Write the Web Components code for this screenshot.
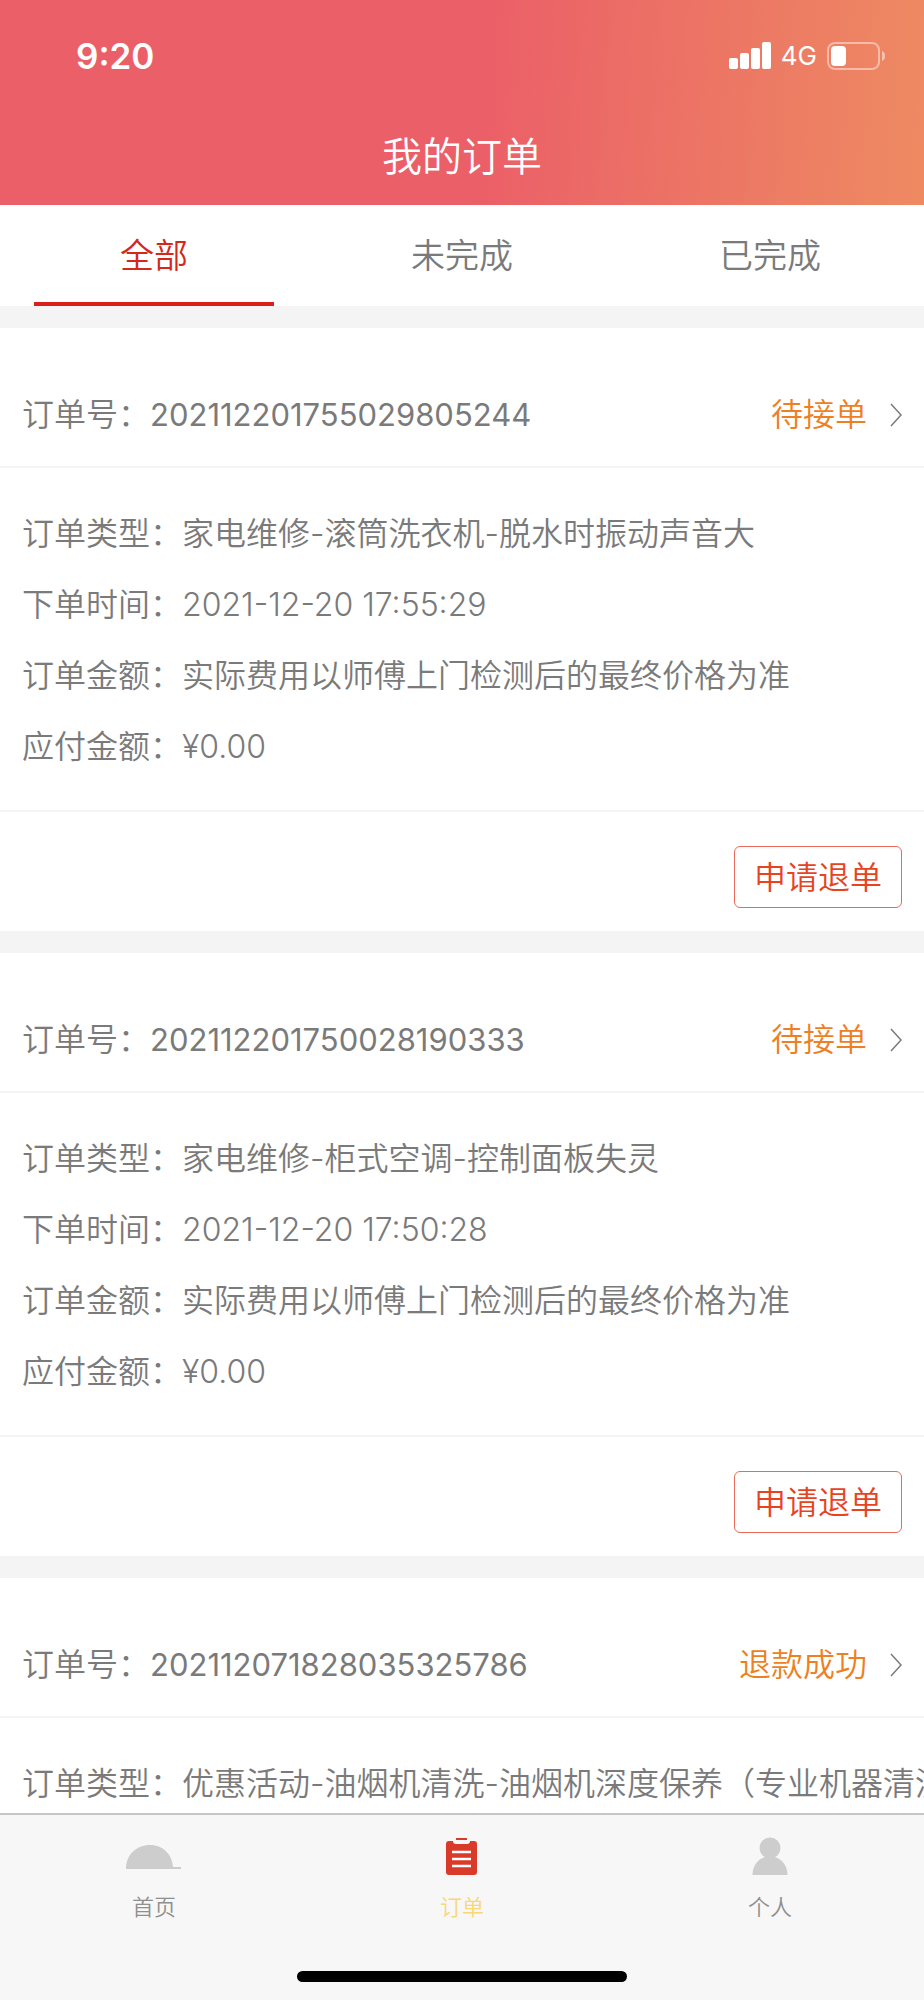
<!DOCTYPE html>
<html lang="zh-CN">
<head>
<meta charset="utf-8">
<meta name="viewport" content="width=device-width, initial-scale=1">
<title>我的订单</title>
<style>
    html, body {
        margin: 0;
        height: 100%;
    }

    body {
        font-family: Inter, "Noto Sans CJK SC", sans-serif;
        font-size: 32px;
        font-weight: 350;
        color: #7a7a7a;
        background: #fff;
    }
</style>
</head>
<body>

<order-page></order-page>

<script>

// phone status bar: time, signal, battery
customElements.define('status-bar', class extends HTMLElement{
    connectedCallback(){
        this.attachShadow({mode: 'open'});
        this.shadowRoot.innerHTML = `
        <style>
        :host {
            display: flex;
            justify-content: space-between;
            align-items: center;
            height: 111px;
            padding: 0 38px 0 76px;
            color: #fff;
        }

        .time {
            font-size: 35px;
            font-weight: 600;
        }

        .right {
            display: flex;
            align-items: center;
            gap: 10px;
            font-size: 26px;
            font-weight: 400;
        }

        svg {
            display: block;
        }
        </style>

        <span class="time">${this.getAttribute('time')}</span>
        <div class="right">
            <svg width="42" height="28" viewBox="0 0 42 28" fill="#fff">
                <rect x="0" y="16" width="9" height="11" rx="2"/>
                <rect x="11" y="11" width="9" height="16" rx="2"/>
                <rect x="22" y="6" width="9" height="21" rx="2"/>
                <rect x="33" y="0" width="9" height="27" rx="2"/>
            </svg>
            <span>${this.getAttribute('network')}</span>
            <svg width="59" height="28" viewBox="0 0 59 28">
                <rect x="1" y="1" width="51" height="26" rx="7" fill="none" stroke="#fff" stroke-opacity=".45" stroke-width="2"/>
                <rect x="4" y="4" width="15" height="20" rx="4" fill="#fff"/>
                <path d="M55 9c4 1 4 9 0 10z" fill="#fff" fill-opacity=".5"/>
            </svg>
        </div>
        `;
    }
});

customElements.define('page-header', class extends HTMLElement{
    connectedCallback(){
        this.attachShadow({mode: 'open'});
        this.shadowRoot.innerHTML = `
        <style>
        :host {
            display: block;
            height: 205px;
            background: linear-gradient(94deg, #eb5f68 0%, #eb5f68 52%, #ec7365 74%, #ee8a62 100%);
        }

        h1 {
            margin: 0;
            padding-top: 16px;
            font-size: 40px;
            line-height: 60px;
            font-weight: inherit;
            text-align: center;
            color: #fff;
        }
        </style>

        <slot name="status"></slot>
        <h1><slot></slot></h1>
        `;
    }
});

customElements.define('order-tabs', class extends HTMLElement{
    connectedCallback(){
        this.attachShadow({mode: 'open'});
        this.shadowRoot.innerHTML = `
        <style>
        :host {
            display: flex;
            background: #fff;
        }

        button {
            flex: 1;
            display: flex;
            justify-content: center;
            padding: 0;
            border: 0;
            background: none;
            font: inherit;
            font-size: 34px;
            color: inherit;
        }

        span {
            width: 78%;
            padding-top: 5px;
            line-height: 92px;
            border-bottom: 4px solid transparent;
        }

        .active {
            color: #d5281c;
        }

        .active span {
            border-color: #d9201a;
        }
        </style>

        <button class="active"><span>全部</span></button>
        <button><span>未完成</span></button>
        <button><span>已完成</span></button>
        `;

        var buttons = this.shadowRoot.querySelectorAll('button');

        for(let elem of buttons){
            elem.addEventListener('click', () => {
                for(let b of buttons) b.classList.remove('active');
                elem.classList.add('active');
            });
        }
    }
});

customElements.define('order-row', class extends HTMLElement{
    connectedCallback(){
        this.attachShadow({mode: 'open'});
        this.shadowRoot.innerHTML = `
        <style>
        :host {
            display: flex;
            line-height: 71px;
            white-space: nowrap;
        }
        </style>

        <span>${this.getAttribute('label')}：</span>
        <span><slot></slot></span>
        `;
    }
});

customElements.define('order-card', class extends HTMLElement{
    connectedCallback(){
        // a refunded order has nothing left to apply for
        var foot = this.hasAttribute('refundable') ? '<div class="foot"><button>申请退单</button></div>' : '';

        this.attachShadow({mode: 'open'});
        this.shadowRoot.innerHTML = `
        <style>
        :host {
            display: block;
            margin-top: 22px;
            background: #fff;
            overflow: hidden;
        }

        .head {
            display: flex;
            align-items: center;
            padding: 63px 22px 27px;
            line-height: 48px;
            border-bottom: 2px solid #f4f4f4;
            color: inherit;
            text-decoration: none;
        }

        .number {
            font-size: 31px;
            font-weight: 400;
        }

        .status {
            margin-left: auto;
            margin-right: 23px;
            color: #ee7f22;
        }

        .body {
            padding: 30px 22px 28px;
        }

        .foot {
            display: flex;
            justify-content: flex-end;
            padding: 34px 22px 23px;
            border-top: 2px solid #f4f4f4;
        }

        button {
            height: 62px;
            margin: 0;
            padding: 0 19px 4px;
            border: 1px solid #ea6a58;
            border-radius: 6px;
            background: #fff;
            font: inherit;
            color: #e8431f;
        }
        </style>

        <a class="head" href="#">
            <span>订单号：</span>
            <span class="number">${this.getAttribute('number')}</span>
            <span class="status">${this.getAttribute('status')}</span>
            <svg width="12" height="24" viewBox="0 0 12 24" fill="none" stroke="#7a7a7a" stroke-width="1.5">
                <path d="M1 1l10 11L1 23"/>
            </svg>
        </a>
        <div class="body"><slot></slot></div>
        ${foot}
        `;
    }
});

customElements.define('bottom-nav', class extends HTMLElement{
    connectedCallback(){
        this.attachShadow({mode: 'open'});
        this.shadowRoot.innerHTML = `
        <style>
        :host {
            display: block;
            border-top: 2px solid #c6c6c6;
            background: #f7f7f7;
        }

        nav {
            display: flex;
        }

        a {
            flex: 1;
            display: flex;
            flex-direction: column;
            align-items: center;
            gap: 14px;
            padding-top: 22px;
            font-size: 22px;
            line-height: 36px;
            color: #8f8f8f;
            text-decoration: none;
        }

        a.active {
            color: #f8d874;
        }

        svg {
            display: block;
        }

        /* home indicator */
        .line {
            width: 330px;
            height: 11px;
            margin: 46px auto 18px;
            border-radius: 6px;
            background: #000;
        }
        </style>

        <nav>
            <a href="#">
                <svg width="56" height="38" viewBox="0 0 56 38" fill="#cdcdcd">
                    <path d="M0 32C0 17 11 8 24 8s22 9 23 22h8v2z"/>
                </svg>
                <span>首页</span>
            </a>
            <a href="#" class="active">
                <svg width="56" height="38" viewBox="0 0 56 38">
                    <rect x="12" y="4" width="31" height="34" rx="3" fill="#d93a29"/>
                    <path d="M19 1h17v3q0 3-3 3H22q-3 0-3-3z" fill="#f7f7f7"/>
                    <path d="M22 1h11v2H22z" fill="#d93a29"/>
                    <path d="M18 15h19M18 22h19M18 29h19" stroke="#fff" stroke-width="2.500"/>
                </svg>
                <span>订单</span>
            </a>
            <a href="#">
                <svg width="56" height="38" viewBox="0 0 56 38" fill="#cdcdcd">
                    <circle cx="28" cy="11" r="10.500"/>
                    <path d="M10.500 38c0-9 5-16 13-18h9c8 2 13 9 13 18z"/>
                </svg>
                <span>个人</span>
            </a>
        </nav>
        <div class="line"></div>
        `;
    }
});

customElements.define('order-page', class extends HTMLElement{
    connectedCallback(){
        this.attachShadow({mode: 'open'});
        this.shadowRoot.innerHTML = `
        <style>
        :host {
            display: flex;
            flex-direction: column;
            height: 100vh;
        }

        main {
            flex: 1;
            min-height: 0;
            overflow: hidden auto;
            scrollbar-width: none;
            background: #f4f4f4;
        }
        </style>

        <page-header>
            <status-bar slot="status" time="9:20" network="4G"></status-bar>
            我的订单
        </page-header>
        <order-tabs></order-tabs>

        <main>
            <order-card number="202112201755029805244" status="待接单" refundable>
                <order-row label="订单类型">家电维修-滚筒洗衣机-脱水时振动声音大</order-row>
                <order-row label="下单时间">2021-12-20 17:55:29</order-row>
                <order-row label="订单金额">实际费用以师傅上门检测后的最终价格为准</order-row>
                <order-row label="应付金额">¥0.00</order-row>
            </order-card>

            <order-card number="202112201750028190333" status="待接单" refundable>
                <order-row label="订单类型">家电维修-柜式空调-控制面板失灵</order-row>
                <order-row label="下单时间">2021-12-20 17:50:28</order-row>
                <order-row label="订单金额">实际费用以师傅上门检测后的最终价格为准</order-row>
                <order-row label="应付金额">¥0.00</order-row>
            </order-card>

            <order-card number="202112071828035325786" status="退款成功">
                <order-row label="订单类型">优惠活动-油烟机清洗-油烟机深度保养（专业机器清洗</order-row>
            </order-card>
        </main>

        <bottom-nav></bottom-nav>
        `;
    }
});

</script>
</body>
</html>
